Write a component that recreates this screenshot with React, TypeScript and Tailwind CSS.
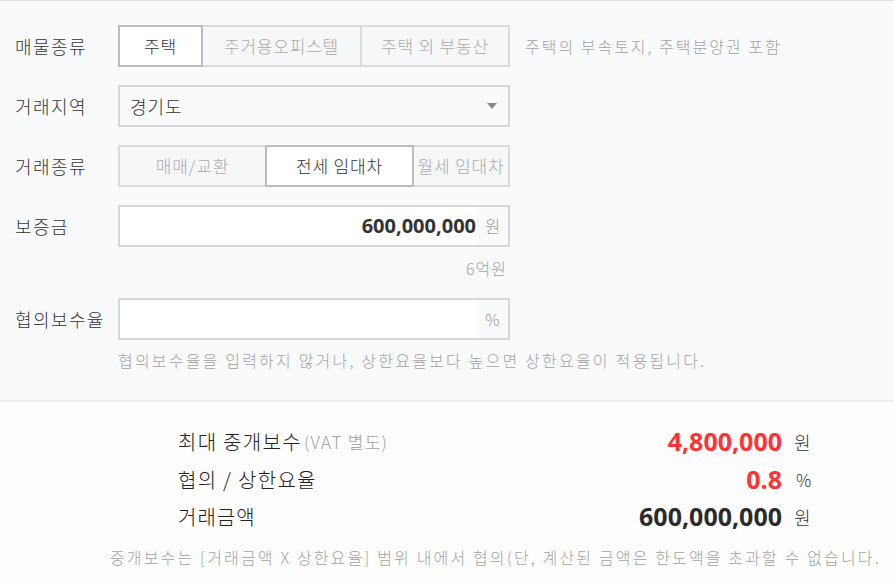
import React from "react";

const KR = "font-['Noto_Sans_CJK_KR','Noto_Sans',sans-serif]";
const NUM = "font-['Open_Sans','Noto_Sans_CJK_KR',sans-serif]";

function Seg({
  items,
}: {
  items: { label: string; w: string; selected?: boolean }[];
}) {
  return (
    <div className="flex h-[42px]">
      {items.map((it, i) => (
        <div
          key={it.label}
          className={`${it.w} ${i > 0 ? "-ml-[2px]" : ""} flex h-full items-center justify-center overflow-hidden whitespace-nowrap border-2 text-[17px] tracking-[0.8px] ${
            it.selected
              ? "relative z-10 border-[#bdbdbd] bg-white text-[#333]"
              : "border-[#dadbde] bg-[#f6f7f9] text-[#aaaaaa]"
          }`}
        >
          {it.label}
        </div>
      ))}
    </div>
  );
}

function Row({ label, children }: { label: string; children: React.ReactNode }) {
  return (
    <div className="flex h-[42px] items-center">
      <div className="w-[118px] pl-[15px] text-[18px] leading-none tracking-[1.4px] text-[#333]">{label}</div>
      {children}
    </div>
  );
}

export default function App() {
  return (
    <div className={`${KR} flex min-h-[585px] w-full flex-col font-light`}>
      <div className="border-t border-[#dcdfe5] bg-[#f9fafc] pt-[24px] pb-[29px] border-b-2 border-b-[#eeeff2]">
        <Row label="매물종류">
          <Seg
            items={[
              { label: "주택", w: "w-[85px]", selected: true },
              { label: "주거용오피스텔", w: "w-[161px]" },
              { label: "주택 외 부동산", w: "w-[150px]" },
            ]}
          />
          <div className="ml-[15px] whitespace-nowrap text-[16px] tracking-[2px] text-[#a3a3a3]">
            주택의 부속토지, 주택분양권 포함
          </div>
        </Row>
        <div className="mt-[18px]">
          <Row label="거래지역">
            <div className="flex h-[42px] w-[392px] items-center justify-between border-2 border-[#d6d7da] bg-[#f9fafc] pl-[10px] pr-[11px]">
              <span className="text-[18px] tracking-[1px] text-[#333]">경기도</span>
              <svg width="10" height="6" viewBox="0 0 10 6">
                <path d="M0 0 H10 L5 6 Z" fill="#8a8a8a" />
              </svg>
            </div>
          </Row>
        </div>
        <div className="mt-[18px]">
          <Row label="거래종류">
            <Seg
              items={[
                { label: "매매/교환", w: "w-[149px]" },
                { label: "전세 임대차", w: "w-[149px]", selected: true },
                { label: "월세 임대차", w: "w-[98px]" },
              ]}
            />
          </Row>
        </div>
        <div className="mt-[18px]">
          <Row label="보증금">
            <div className="flex h-[42px] w-[392px] border-2 border-[#d6d7da]">
              <div className={`${NUM} flex flex-1 items-center justify-end bg-white pr-[1px] text-[20px] font-bold text-[#333]`}>
                600,000,000
              </div>
              <div className="flex w-[31px] items-center justify-center bg-[#f9fafc] text-[17px] text-[#9a9a9a]">
                원
              </div>
            </div>
          </Row>
        </div>
        <div className="mt-[10px] flex h-[22px] w-[510px] items-center justify-end pr-[3px] text-[16px] tracking-[1px] text-[#a3a3a3]">
          6억원
        </div>
        <div className="mt-[19px]">
          <Row label="협의보수율">
            <div className="flex h-[42px] w-[392px] border-2 border-[#d6d7da]">
              <div className="flex-1 bg-white" />
              <div className="flex w-[31px] items-center justify-center bg-[#f9fafc] text-[16px] text-[#9a9a9a]">
                %
              </div>
            </div>
          </Row>
        </div>
        <div className="mt-[9px] flex h-[22px] items-center whitespace-nowrap pl-[118px] text-[16px] tracking-[2.2px] text-[#a3a3a3]">
          협의보수율을 입력하지 않거나, 상한요율보다 높으면 상한요율이 적용됩니다.
        </div>
      </div>
      <div className="flex-1 bg-[#fdfdfd] pt-[24px]">
        <div className="pl-[178px] pr-[82px]">
          <div className="flex h-[32px] items-center">
            <div className="flex flex-1 items-center text-[20px] tracking-[1.3px] text-[#222]">
              최대 중개보수
              <span className="ml-[2px] text-[17px] tracking-[1.3px] text-[#a0a0a0]">(VAT 별도)</span>
            </div>
            <div className={`${NUM} text-[25px] font-bold text-[#ff3333]`}>4,800,000</div>
            <div className="w-[30px] pl-[12px] text-[18px] text-[#333]">원</div>
          </div>
          <div className="mt-[6px] flex h-[32px] items-center">
            <div className="flex-1 text-[20px] tracking-[1.3px] text-[#222]">협의 / 상한요율</div>
            <div className={`${NUM} text-[25px] font-bold text-[#ff3333]`}>0.8</div>
            <div className="w-[30px] pl-[14px] text-[17px] text-[#333]">%</div>
          </div>
          <div className="mt-[5px] flex h-[32px] items-center">
            <div className="flex-1 text-[20px] tracking-[1px] text-[#222]">거래금액</div>
            <div className={`${NUM} text-[25px] font-bold text-[#2b2b2b]`}>600,000,000</div>
            <div className="w-[30px] pl-[12px] text-[18px] text-[#333]">원</div>
          </div>
        </div>
        <div className="mt-[13px] flex h-[22px] items-center whitespace-nowrap pl-[110px] text-[16px] tracking-[2.15px] text-[#a3a3a3]">
          중개보수는 [거래금액 X 상한요율] 범위 내에서 협의(단, 계산된 금액은 한도액을 초과할 수 없습니다.
        </div>
      </div>
    </div>
  );
}
